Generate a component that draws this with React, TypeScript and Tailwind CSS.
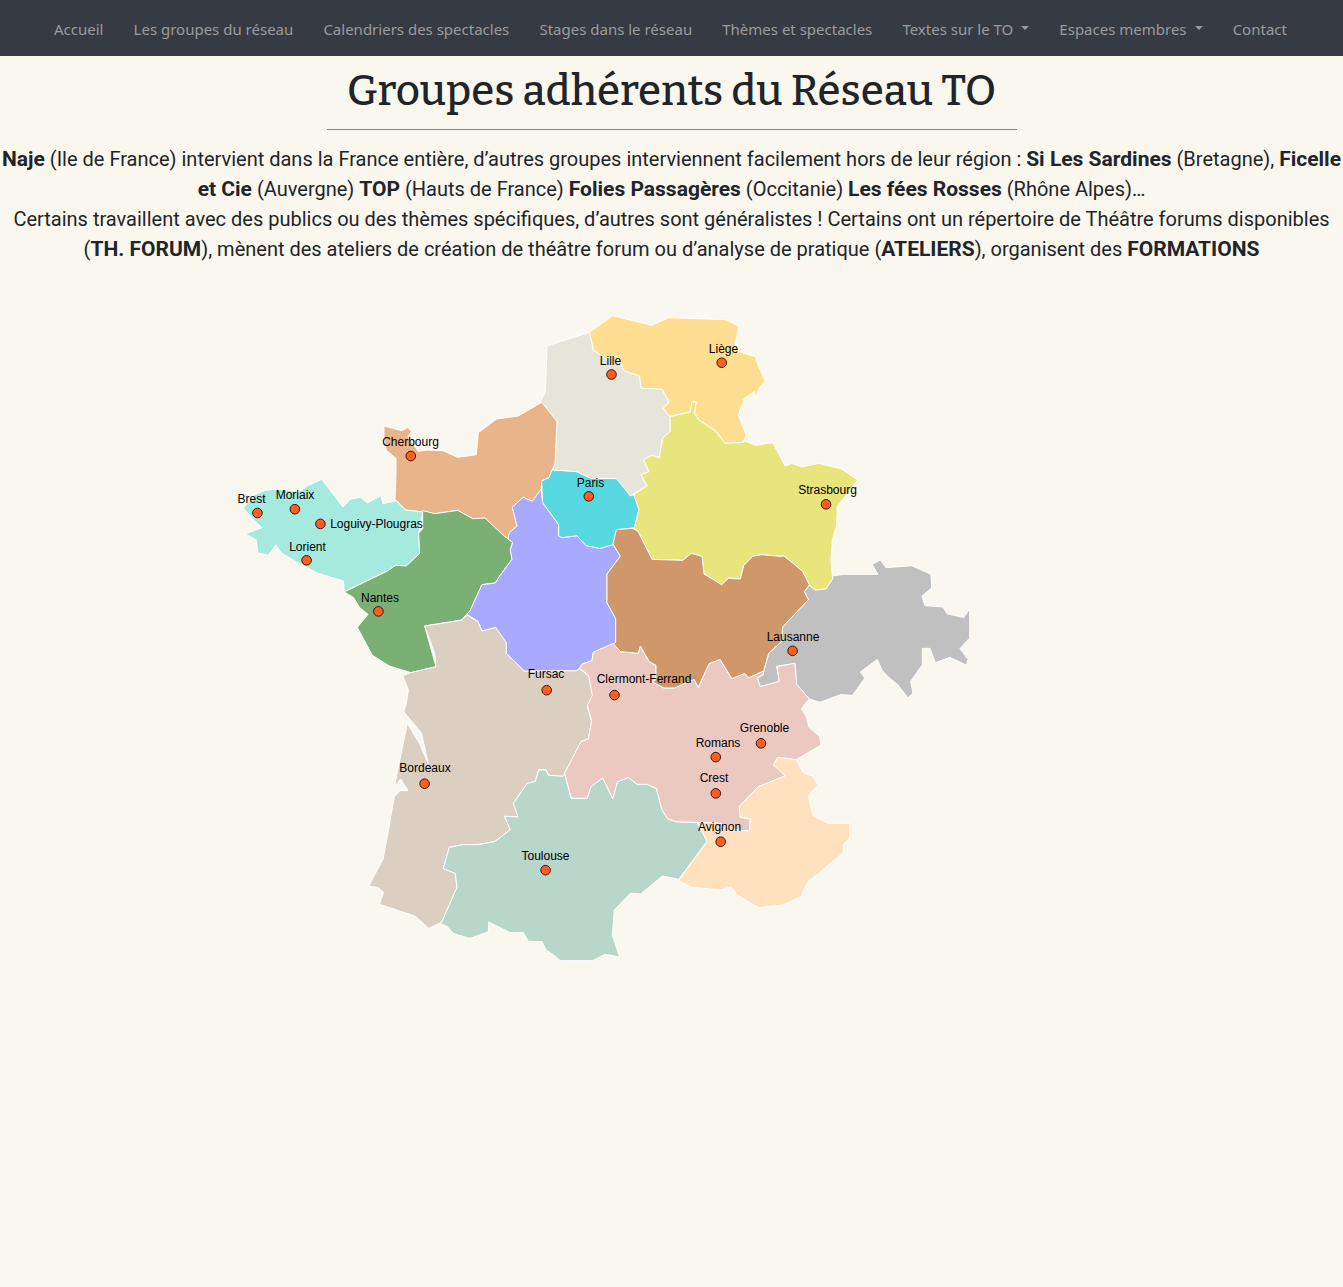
type Region = { name: string; fill: string; x: number; y: number; points: string };
type City = { name: string; x: number; y: number; lx: number; ly: number };

const navItems = [
  { label: "Accueil" },
  { label: "Les groupes du réseau" },
  { label: "Calendriers des spectacles" },
  { label: "Stages dans le réseau" },
  { label: "Thèmes et spectacles" },
  { label: "Textes sur le TO", menu: true },
  { label: "Espaces membres", menu: true },
  { label: "Contact" },
];

// Outlines are stored at three times the map scale, relative to each region's own origin.
const regions: Region[] = [
  {
    name: "Belgique", fill: "#ffde91", x: 460, y: 300,
    points: "388,97 458,47 575,76 627,53 798,59 837,79 824,135 836,155 887,170 892,190 916,243 902,257 886,295 884,274 852,297 835,345 858,403 850,427 795,430 767,393 715,358 703,340 709,306 697,306 691,336 627,349 609,325 627,306 606,268 543,265 538,228 493,213 480,190 470,168 440,178 400,150",
  },
  {
    name: "Hauts-de-France", fill: "#e7e4d9", x: 460, y: 300,
    points: "388,97 261,138 256,275 241,305 245,307 291,364 285,490 276,510 349,515 392,535 470,536 511,588 561,557 543,524 567,515 551,479 575,466 598,473 608,415 631,394 629,350 609,325 627,306 606,268 543,265 538,228 493,213 480,190 470,168 440,178 400,150",
  },
  {
    name: "Normandie", fill: "#eab48b", x: 460, y: 300,
    points: "-228,378 -175,392 -156,382 -146,395 -156,410 -125,454 -100,450 -51,452 -7,472 49,464 55,398 110,357 175,348 245,307 291,364 285,490 276,512 267,533 245,543 244,570 218,604 190,592 157,622 171,678 149,698 145,716 128,707 75,654 37,657 -7,631 -75,641 -112,636 -164,630 -191,602 -195,598 -192,520 -192,475 -222,450 -228,410",
  },
  {
    name: "Bretagne", fill: "#a6e9df", x: 230, y: 390,
    points: "40,354 75,314 107,300 150,297 205,306 235,286 275,268 339,351 362,327 392,322 412,339 453,317 459,341 499,332 526,360 578,366 566,430 569,490 529,528 497,526 474,542 343,605 340,573 264,550 200,516 155,490 137,465 115,496 84,489 78,449 45,432 95,413 75,393",
  },
  {
    name: "Pays de la Loire", fill: "#7ab074", x: 230, y: 390,
    points: "578,362 615,371 683,361 728,386 765,384 820,436 848,457 841,480 846,508 807,561 796,579 756,584 720,663 694,690 584,708 618,830 543,848 478,828 427,796 382,712 414,673 388,652 370,622 343,606 474,542 497,526 529,528 569,490 566,430 578,416",
  },
  {
    name: "Nouvelle-Aquitaine", fill: "#dbcfc1", x: 350, y: 610,
    points: "224,48 334,31 351,15 384,35 396,63 437,52 469,98 469,130 523,183 681,182 689,176 716,198 728,256 712,290 725,334 715,387 693,395 644,492 638,499 597,497 587,479 567,479 556,514 531,521 490,580 504,620 463,619 481,659 434,695 385,703 340,704 298,712 280,776 316,790 321,832 275,937 236,955 195,918 88,883 101,847 83,832 56,829 100,745 133,560 150,542 174,542 152,507 133,530 172,340 208,400 235,462 230,440 214,368 161,305 169,280 175,240 158,197 182,188 258,170 254,130",
  },
  {
    name: "Centre-Val de Loire", fill: "#a8aaff", x: 440, y: 480,
    points: "303,28 277,64 249,52 217,82 231,138 208,158 204,177 218,187 211,210 216,238 177,291 166,309 126,314 90,393 80,403 114,424 126,453 167,442 199,488 199,520 253,573 411,572 427,552 456,542 460,517 527,488 527,416 501,368 501,282 541,229 519,192 480,206 438,196 411,167 366,173 356,167 356,134 308,68",
  },
  {
    name: "Île-de-France", fill: "#58d8e0", x: 460, y: 300,
    points: "276,510 349,515 392,535 470,536 511,588 521,584 537,628 523,684 470,689 460,734 419,745 378,737 351,707 306,713 296,708 296,674 248,608 245,543 267,533",
  },
  {
    name: "Grand Est", fill: "#e9e57d", x: 600, y: 390,
    points: "210,80 271,66 276,36 288,36 284,70 296,90 347,123 375,160 431,157 436,153 466,166 518,158 556,228 575,220 605,231 656,220 725,237 773,270 712,350 710,405 697,450 693,510 698,567 678,597 645,600 628,584 607,543 552,498 540,499 485,494 458,499 431,527 421,567 385,565 365,584 312,552 306,499 274,490 248,511 156,508 114,424 103,414 117,358 101,314 141,287 123,254 147,245 131,209 155,196 178,203 188,145 211,124",
  },
  {
    name: "Suisse", fill: "#c0c0c0", x: 740, y: 540,
    points: "278,108 310,103 414,103 396,73 421,60 438,83 515,77 573,103 575,144 546,168 555,197 609,201 621,221 671,233 700,190 700,283 687,296 660,326 684,358 680,376 630,352 586,368 570,325 547,325 547,374 512,424 519,459 504,474 474,435 444,410 427,392 412,358 361,396 374,415 338,466 302,464 240,487 208,477 170,433 165,371 110,379 118,424 61,440 52,415 70,403 72,390 87,339 125,305 128,260 205,179 193,155 208,136 225,150 258,147 278,117",
  },
  {
    name: "Auvergne-Rhône-Alpes", fill: "#ebc9c0", x: 540, y: 630,
    points: "220,40 242,65 295,70 300,48 328,95 348,106 348,148 338,155 372,174 405,174 462,145 475,173 507,101 540,88 575,146 613,130 625,143 671,123 670,133 652,145 661,170 718,154 711,109 765,100 770,163 808,207 784,236 798,258 807,292 840,320 842,346 768,389 713,382 700,405 737,437 655,470 598,529 601,562 631,567 629,602 600,602 530,578 472,577 411,576 382,567 366,540 348,475 321,464 291,463 265,443 233,456 218,507 188,444 153,471 142,505 94,505 73,431 123,335 145,327 155,273 142,227 157,196 146,137 119,114 127,102 156,92 160,67",
  },
  {
    name: "Bourgogne-Franche-Comté", fill: "#cf976a", x: 600, y: 390,
    points: "49,419 97,415 114,424 156,508 248,511 274,490 306,499 312,552 365,584 385,565 421,567 431,527 458,499 485,494 540,499 552,498 607,543 628,584 613,605 625,629 548,711 544,755 506,790 491,843 446,863 434,850 396,866 360,808 327,821 295,892 282,868 224,894 192,894 158,876 168,868 168,826 148,815 121,768 115,790 62,785 40,762 47,758 47,686 21,638 21,552 61,499 39,462",
  },
  {
    name: "Provence-Alpes-Côte d’Azur", fill: "#ffe1c0", x: 540, y: 630,
    points: "472,577 530,578 600,602 629,602 631,567 601,562 598,529 655,470 737,437 700,405 713,382 768,389 790,428 817,438 834,464 805,497 819,558 868,581 930,580 929,625 910,643 910,668 802,758 783,800 730,825 655,833 590,793 573,770 543,780 455,772 415,752 501,634",
  },
  {
    name: "Occitanie", fill: "#b9d6ca", x: 420, y: 750,
    points: "434,71 453,145 502,145 513,110 548,84 578,147 593,95 626,83 651,103 680,103 709,116 725,178 743,207 770,216 832,218 861,274 776,388 727,378 662,432 631,430 583,480 577,556 599,621 556,613 518,632 421,632 400,614 378,600 366,575 325,574 310,548 271,548 206,516 205,545 150,565 101,551 80,528 62,522 66,515 111,412 106,370 70,356 88,292 130,284 175,284 224,275 271,239 254,199 294,201 280,160 321,101 346,94 356,60 377,60 386,76 428,79",
  },
];

const cities: City[] = [
  { name: "Lille", x: 611.5, y: 374.5, lx: 610.5, ly: 365 },
  { name: "Liège", x: 721.7, y: 362.7, lx: 723.5, ly: 353 },
  { name: "Cherbourg", x: 410.8, y: 456, lx: 410.5, ly: 446 },
  { name: "Paris", x: 588.8, y: 496.4, lx: 590.5, ly: 487 },
  { name: "Strasbourg", x: 826, y: 504.3, lx: 827.5, ly: 494 },
  { name: "Brest", x: 257.4, y: 513, lx: 251.5, ly: 503 },
  { name: "Morlaix", x: 294.9, y: 509.2, lx: 295, ly: 499 },
  { name: "Loguivy-Plougras", x: 320.4, y: 523.9, lx: 376.5, ly: 528 },
  { name: "Lorient", x: 306.6, y: 560.3, lx: 307.5, ly: 551 },
  { name: "Nantes", x: 378.4, y: 611.4, lx: 380, ly: 602 },
  { name: "Lausanne", x: 792.6, y: 650.8, lx: 793, ly: 641 },
  { name: "Fursac", x: 546.7, y: 690.2, lx: 546, ly: 678 },
  { name: "Clermont-Ferrand", x: 614.5, y: 695.1, lx: 644, ly: 683 },
  { name: "Grenoble", x: 761, y: 743.3, lx: 764.5, ly: 732 },
  { name: "Romans", x: 715.8, y: 757.1, lx: 718, ly: 747 },
  { name: "Bordeaux", x: 424.6, y: 783.7, lx: 425, ly: 772 },
  { name: "Crest", x: 715.8, y: 793.4, lx: 714, ly: 782 },
  { name: "Avignon", x: 720.7, y: 841.7, lx: 719.5, ly: 831 },
  { name: "Toulouse", x: 545.6, y: 870.2, lx: 545.5, ly: 860 },
];

function NavBar() {
  return (
    <nav className="bg-[#363a42] pl-[54px] pr-14 font-['Noto_Sans','Open_Sans',sans-serif] text-[15px] leading-6 text-[#9a9c9f]">
      <ul className="flex min-h-14 flex-wrap items-center justify-between gap-x-4 pt-0.5">
        {navItems.map((item) => (
          <li key={item.label}>
            {item.menu ? (
              <button type="button" aria-haspopup="menu" className="flex items-center gap-2">
                {item.label}
                <span className="mb-0.5 border-x-4 border-t-4 border-x-transparent border-t-current" />
              </button>
            ) : (
              <a href="#">{item.label}</a>
            )}
          </li>
        ))}
      </ul>
    </nav>
  );
}

function GroupsMap() {
  return (
    <svg viewBox="229 300 740 670" className="w-full max-w-[740px]" role="img" aria-label="Carte des groupes adhérents">
      {regions.map((r) => (
        <polygon
          key={r.name}
          aria-label={r.name}
          transform={`translate(${r.x} ${r.y}) scale(0.33333)`}
          points={r.points}
          fill={r.fill}
          stroke="#fff"
          strokeWidth={3}
        />
      ))}
      {cities.map((c) => (
        <g key={c.name}>
          <circle cx={c.x} cy={c.y} r={4.8} fill="#ff5e20" stroke="#33190f" />
          <text x={c.lx} y={c.ly} textAnchor="middle" className="fill-black font-['Liberation_Sans',Arial,sans-serif] text-[12px]">
            {c.name}
          </text>
        </g>
      ))}
    </svg>
  );
}

export default function App() {
  return (
    <div className="min-h-screen bg-[#faf7ee] text-[#212529]">
      <NavBar />
      <main>
        <h1 className="pt-2.5 text-center font-['Bitter','DejaVu_Serif',serif] text-[42px] font-medium leading-[50px]">
          Groupes adhérents du Réseau TO
        </h1>
        <hr className="mx-auto mt-[13px] max-w-[690px] border-[#858481]" />
        <p className="mt-[14px] text-center font-[Roboto,sans-serif] text-xl leading-[30px] [&>b]:text-[21px] [&>b]:leading-none">
          <b>Naje</b> (Ile de France) intervient dans la France entière, d’autres groupes interviennent facilement hors
          de leur région : <b>Si Les Sardines</b> (Bretagne), <b>Ficelle et Cie</b> (Auvergne) <b>TOP</b> (Hauts de
          France) <b>Folies Passagères</b> (Occitanie) <b>Les fées Rosses</b> (Rhône Alpes)…
          <br />
          Certains travaillent avec des publics ou des thèmes spécifiques, d’autres sont généralistes ! Certains ont un
          répertoire de Théâtre forums disponibles (<b>TH. FORUM</b>), mènent des ateliers de création de théâtre forum
          ou d’analyse de pratique (<b>ATELIERS</b>), organisent des <b>FORMATIONS</b>
        </p>
        <div className="mx-auto mt-9 max-w-[885px]">
          <GroupsMap />
        </div>
      </main>
    </div>
  );
}
